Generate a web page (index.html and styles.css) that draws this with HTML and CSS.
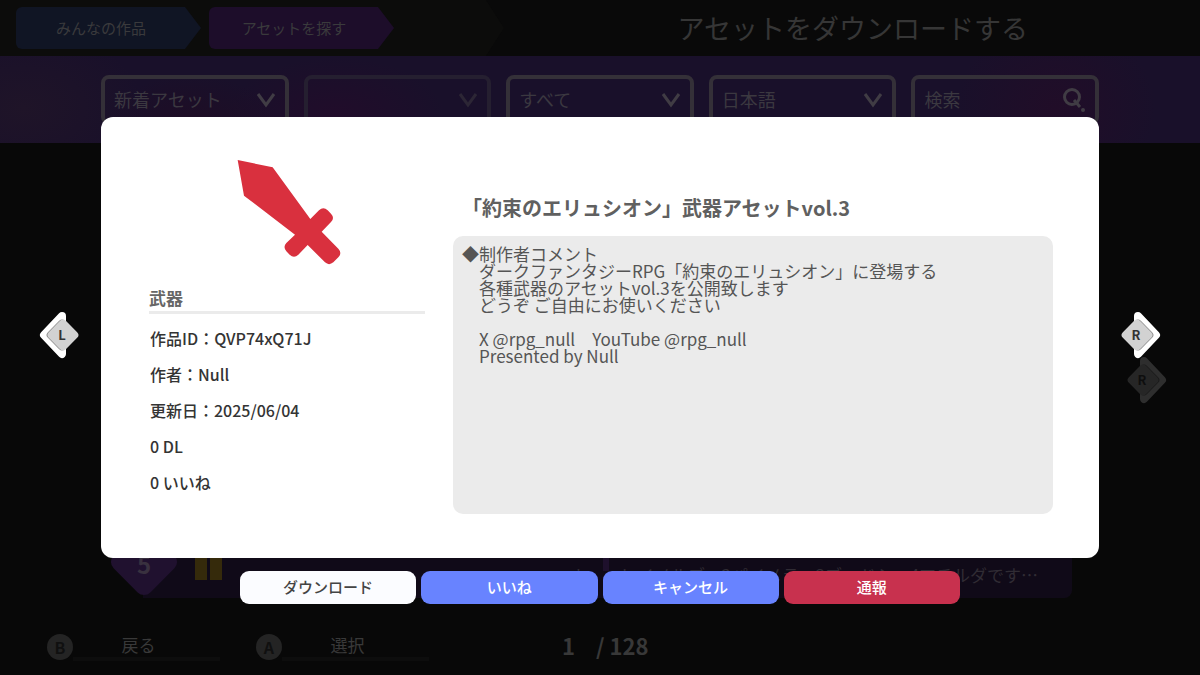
FILE: index.html
```html
<!DOCTYPE html>
<html lang="ja">
<head>
<meta charset="utf-8">
<meta name="viewport" content="width=device-width, initial-scale=1">
<title>アセットをダウンロードする</title>
<link rel="stylesheet" href="styles.css">
</head>
<body>
<div class="app">
  <header class="topbar">
    <nav class="tabs">
      <button class="tab tab-works" type="button">みんなの作品</button>
      <button class="tab tab-assets" type="button">アセットを探す</button>
    </nav>
    <h1 class="page-title">アセットをダウンロードする</h1>
  </header>

  <section class="filters">
    <div class="field">
      <select aria-label="並び順"><option>新着アセット</option></select>
      <svg class="chevron" viewBox="0 0 20 16"><path d="M2 2l8 11 8-11"/></svg>
    </div>
    <div class="field field-off">
      <select aria-label="サブカテゴリ" disabled><option></option></select>
      <svg class="chevron" viewBox="0 0 20 16"><path d="M2 2l8 11 8-11"/></svg>
    </div>
    <div class="field">
      <select aria-label="種類"><option>すべて</option></select>
      <svg class="chevron" viewBox="0 0 20 16"><path d="M2 2l8 11 8-11"/></svg>
    </div>
    <div class="field">
      <select aria-label="言語"><option>日本語</option></select>
      <svg class="chevron" viewBox="0 0 20 16"><path d="M2 2l8 11 8-11"/></svg>
    </div>
    <div class="field">
      <input type="search" aria-label="検索" placeholder="検索">
      <svg class="lens" viewBox="0 0 24 26"><circle cx="10" cy="10" r="7.5"/><path d="M12 13l6 7"/><circle class="dot" cx="21" cy="23" r="2"/></svg>
    </div>
  </section>

  <main class="list">
    <article class="row">
      <svg class="badge" viewBox="0 0 74 74"><rect x="11" y="11" width="52" height="52" rx="9" transform="rotate(45 37 37)"/><text x="37" y="49">5</text></svg>
      <span class="bars"><i></i><i></i></span>
      <p class="row-name">、ト</p>
      <span class="divider"></span>
      <p class="row-text">レイメルブ、2パイメラ、3ブードシ、4マチルダです…</p>
    </article>
  </main>

  <footer class="footer">
    <button class="hint" type="button"><span class="pad">B</span><span class="hint-label">戻る</span></button>
    <button class="hint" type="button"><span class="pad">A</span><span class="hint-label">選択</span></button>
    <p class="pager"><span>1</span><span>/ 128</span></p>
  </footer>
</div>

<div class="overlay">
  <div class="stage">
    <button class="key key-prev" type="button" aria-label="前へ">
      <svg viewBox="0 0 40 48"><path class="edge" d="M23 5L5 24l18 19z"/><rect class="cap-shade" x="11" y="12" width="24" height="24" rx="4" transform="rotate(45 23 24)"/><rect class="cap" x="12" y="12" width="24" height="24" rx="4" transform="rotate(45 24 24)"/><text x="23" y="29">L</text></svg>
    </button>
    <section class="dialog" role="dialog" aria-modal="true" aria-labelledby="asset-title">
      <div class="summary">
        <svg class="sword" viewBox="412 148 312 316"><path d="M414 150L519 172 632 327 658 301Q671 289 684 301L694 311Q706 324 694 336L666 365 716 416Q728 429 716 442L701 457Q688 468 676 457L624 405 596 434Q583 446 570 434L560 424Q549 411 560 399L586 374 433 257Z"/></svg>
        <h3 class="kind">武器</h3>
        <ul class="meta">
          <li>作品ID：QVP74xQ71J</li>
          <li>作者：Null</li>
          <li>更新日：2025/06/04</li>
          <li>0 DL</li>
          <li>0 いいね</li>
        </ul>
      </div>
      <div class="detail">
        <h2 class="asset-title" id="asset-title">「約束のエリュシオン」武器アセットvol.3</h2>
        <p class="comment">◆制作者コメント
　ダークファンタジーRPG「約束のエリュシオン」に登場する
　各種武器のアセットvol.3を公開致します
　どうぞ ご自由にお使いください

　X @rpg_null　YouTube @rpg_null
　Presented by Null</p>
      </div>
    </section>
    <div class="next">
      <button class="key key-dim" type="button" aria-label="次のページ" disabled>
        <svg viewBox="0 0 40 48"><path class="edge" d="M17 5l18 19-18 19z"/><rect class="cap-shade" x="5" y="12" width="24" height="24" rx="4" transform="rotate(45 17 24)"/><rect class="cap" x="4" y="12" width="24" height="24" rx="4" transform="rotate(45 16 24)"/><text x="15" y="29">R</text></svg>
      </button>
      <button class="key key-next" type="button" aria-label="次へ">
        <svg viewBox="0 0 40 48"><path class="edge" d="M17 5l18 19-18 19z"/><rect class="cap-shade" x="5" y="12" width="24" height="24" rx="4" transform="rotate(45 17 24)"/><rect class="cap" x="4" y="12" width="24" height="24" rx="4" transform="rotate(45 16 24)"/><text x="15" y="29">R</text></svg>
      </button>
    </div>
  </div>
  <div class="actions">
    <button class="action action-download" type="button">ダウンロード</button>
    <button class="action" type="button">いいね</button>
    <button class="action" type="button">キャンセル</button>
    <button class="action action-report" type="button">通報</button>
  </div>
</div>
</body>
</html>
```
FILE: styles.css
```css
* {
  box-sizing: border-box;
}

body {
  margin: 0;
  background: #080808;
  color: #343434;
  font-family: "Noto Sans CJK JP", "Noto Sans", sans-serif;
}

h1, h2, h3, p, ul {
  margin: 0;
  padding: 0;
}

button, select, input {
  margin: 0;
  border: 0;
  font: inherit;
  color: inherit;
}

.app {
  display: flex;
  flex-direction: column;
  min-height: 100vh;
}

/* Top bar */
.topbar {
  display: flex;
  align-items: center;
  justify-content: space-between;
  height: 56px;
  padding: 0 172px 0 0;
  background: #090909;
}

.tabs {
  display: flex;
  align-items: center;
  gap: 8px;
  height: 56px;
  padding: 0 110px 0 16px;
  background: #0c0c0b;
  clip-path: polygon(0 0, calc(100% - 18px) 0, 100% 50%, calc(100% - 18px) 100%, 0 100%);
}

.tab {
  width: 185px;
  height: 42px;
  padding: 0 15px 2px 0;
  border-radius: 6px;
  font-size: 15px;
  color: #3a3a3c;
  clip-path: polygon(0 0, calc(100% - 16px) 0, 100% 50%, calc(100% - 16px) 100%, 0 100%);
}

.tab-works {
  background: #101524;
}

.tab-assets {
  background: #1d0d2a;
}

.page-title {
  font-size: 27px;
  font-weight: 400;
  line-height: 40px;
  color: #363636;
}

/* Filters */
.filters {
  display: grid;
  grid-template-columns: repeat(5, minmax(0, 1fr));
  gap: 15px;
  padding: 19px 101px 18px;
  background:
    radial-gradient(ellipse 90px 60px at 16% 90%, #1f0c24, transparent),
    radial-gradient(ellipse 110px 60px at 28% 70%, #210c2a, transparent),
    radial-gradient(ellipse 120px 80px at 2% 60%, #1f1428, transparent),
    radial-gradient(ellipse 100px 90px at 88% 60%, #210d28, transparent),
    #19102a;
}

.field {
  position: relative;
  display: flex;
  height: 50px;
  border: 4px solid #343038;
  border-radius: 8px;
  color: #3b3840;
}

.field-off {
  border-color: #251f30;
  color: #29242f;
}

.field select,
.field input {
  flex: 1;
  min-width: 0;
  padding: 0 9px 2px;
  appearance: none;
  background: transparent;
  font-size: 18px;
  opacity: 1;
}

.field input::placeholder {
  color: inherit;
  opacity: 1;
}

.chevron,
.lens {
  position: absolute;
  fill: none;
  stroke: #403c44;
  stroke-width: 3;
  pointer-events: none;
}

.chevron {
  top: 13px;
  right: 9px;
  width: 20px;
  height: 16px;
}

.field-off .chevron {
  stroke: #2c2635;
}

.lens {
  top: 8px;
  right: 9px;
  width: 24px;
  height: 26px;
}

.lens .dot {
  fill: #403c44;
  stroke: none;
}

/* Result list */
.list {
  display: flex;
  flex: 1;
  flex-direction: column;
  justify-content: flex-end;
  padding: 0 128px 0 107px;
}

.row {
  display: flex;
  align-items: center;
  height: 72px;
  border-radius: 8px;
  background: linear-gradient(90deg, transparent 36px, #100a18 36px);
  color: #302c34;
}

.badge {
  width: 74px;
  height: 74px;
  fill: #20112f;
}

.badge text {
  fill: #39313f;
  font-size: 24px;
  font-weight: 700;
  text-anchor: middle;
}

.bars {
  display: flex;
  gap: 3px;
  margin-left: 14px;
}

.bars i {
  width: 12px;
  height: 36px;
  background: #352a0b;
}

.row-name {
  flex: 1;
  padding: 25px 14px 0 0;
  font-size: 17px;
  line-height: 24px;
  text-align: right;
}

.divider {
  width: 6px;
  height: 18px;
  background: #1e102c;
}

.row-text {
  flex: 0 0 463px;
  padding: 25px 36px 0 11px;
  overflow: hidden;
  font-size: 17px;
  line-height: 24px;
  white-space: nowrap;
}

/* Footer */
.footer {
  display: flex;
  align-items: center;
  gap: 36px;
  height: 77px;
  padding: 20px 47px 0;
}

.hint {
  display: flex;
  align-items: center;
  width: 173px;
  padding: 0;
  background: none;
  color: #393939;
}

.pad {
  width: 26px;
  border-radius: 50%;
  background: #242424;
  color: #101010;
  font-size: 16px;
  font-weight: 700;
  line-height: 26px;
}

.hint-label {
  flex: 1;
  padding-right: 16px;
  border-bottom: 4px solid #0d0d0d;
  font-size: 17px;
  line-height: 24px;
}

.pager {
  display: flex;
  gap: 21px;
  margin-left: 97px;
  padding-bottom: 3px;
  color: #383838;
  font-size: 22px;
  font-weight: 700;
  line-height: 32px;
}

/* Dialog layer */
.overlay {
  position: absolute;
  inset: 0;
  padding-top: 117px;
}

.stage {
  display: grid;
  grid-template-columns: 101px 1fr 101px;
  align-items: center;
}

.dialog {
  display: flex;
  gap: 28px;
  min-height: 441px;
  padding: 42px 46px 44px 48px;
  border-radius: 12px;
  background: #fff;
}

.summary {
  display: flex;
  flex: 0 0 276px;
  flex-direction: column;
}

.sword {
  align-self: center;
  width: 104px;
  height: 106px;
  margin-left: 4px;
  fill: #d9303e;
}

.kind {
  margin-top: 20px;
  border-bottom: 3px solid #ebebeb;
  color: #666;
  font-size: 17px;
  font-weight: 700;
  line-height: 26px;
}

.meta {
  display: flex;
  flex-direction: column;
  gap: 12px;
  margin-top: 12px;
  padding-left: 1px;
  list-style: none;
  font-size: 16px;
  font-weight: 500;
  line-height: 24px;
}

.detail {
  display: flex;
  flex: 1;
  flex-direction: column;
  gap: 13px;
  min-width: 0;
  padding-top: 34px;
}

.asset-title {
  padding-left: 9px;
  color: #606060;
  font-size: 20px;
  font-weight: 700;
  line-height: 30px;
}

.comment {
  flex: 1;
  padding: 9px;
  border-radius: 10px;
  background: #ebebeb;
  color: #555;
  font-size: 17px;
  line-height: 17px;
  white-space: pre-wrap;
}

/* Shoulder-button keys */
.key {
  display: block;
  width: 40px;
  height: 48px;
  padding: 0;
  background: none;
}

.key svg {
  display: block;
}

.key-prev {
  justify-self: end;
  margin: 0 22px 5px 0;
}

.next {
  position: relative;
  padding: 0 0 5px 22px;
}

.key-dim {
  position: absolute;
  top: 45px;
  left: 28px;
}

.edge {
  fill: #fff;
  stroke: #fff;
  stroke-width: 8;
  stroke-linecap: round;
  stroke-linejoin: round;
}

.cap-shade {
  fill: #8c8c8c;
}

.cap {
  fill: #d2d2d2;
}

.key text {
  fill: #333;
  font-size: 13px;
  font-weight: 700;
  text-anchor: middle;
}

.key-dim .edge {
  fill: #2e2e2e;
  stroke: #2e2e2e;
}

.key-dim .cap-shade {
  fill: #1a1a1a;
}

.key-dim .cap {
  fill: #262626;
}

.key-dim text {
  fill: #0e0e0e;
}

/* Dialog actions */
.actions {
  display: grid;
  grid-template-columns: repeat(4, 1fr);
  gap: 5px;
  width: 60%;
  margin: 13px auto 0;
}

.action {
  height: 33px;
  padding: 0 0 2px;
  border-radius: 9px;
  background: #6883ff;
  color: #fff;
  font-size: 15px;
  font-weight: 500;
}

.action-download {
  background: #fbfcff;
  color: #444;
}

.action-report {
  background: #c8314e;
}
```
